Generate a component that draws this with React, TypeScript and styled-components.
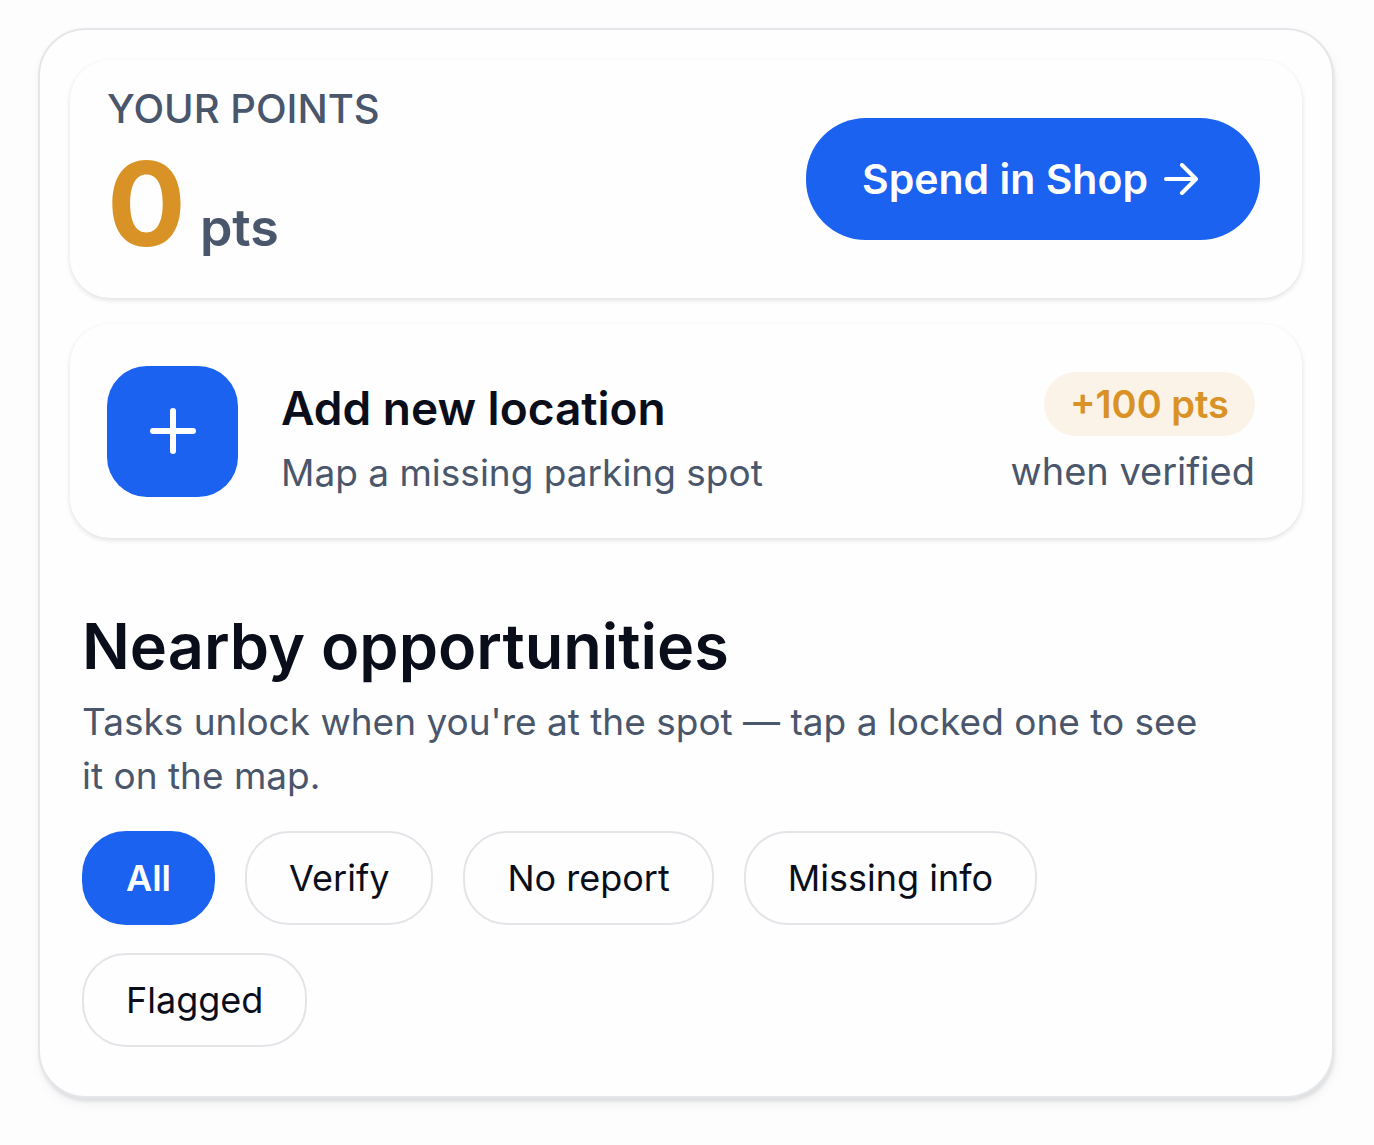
import React, { useState } from "react";
import styled, { createGlobalStyle } from "styled-components";

const GlobalStyle = createGlobalStyle`
  * { box-sizing: border-box; }
  body {
    margin: 0;
    background: #fdfdfd;
    font-family: Inter, "Liberation Sans", sans-serif;
    color: #0a0e1a;
  }
  h1, h2, p { margin: 0; }
  button { font: inherit; cursor: pointer; }
`;

const Page = styled.div`
  padding: 28px 40px 46px 38px;
`;

const Panel = styled.main`
  display: flex;
  flex-direction: column;
  gap: 26px;
  padding: 30px 30px 49px;
  border: 2px solid #e4e6e9;
  border-radius: 48px;
  background: #fefefe;
  box-shadow: 1px 4px 3px rgba(15, 23, 42, 0.08), 1px 6px 12px rgba(15, 23, 42, 0.05);
`;

const Card = styled.section`
  display: flex;
  align-items: center;
  border-radius: 40px;
  background: #fefefe;
  box-shadow: 0 2px 5px rgba(15, 23, 42, 0.13);
`;

const PointsCard = styled(Card)`
  justify-content: space-between;
  padding: 30px 42px 30px 37px;
`;

const Label = styled.p`
  font-size: 40px;
  line-height: 38px;
  font-weight: 500;
  color: #4a566b;
`;

const Points = styled.p`
  display: flex;
  align-items: baseline;
  gap: 14px;
  margin-top: 12px;
`;

const Amount = styled.span`
  font-size: 117px;
  line-height: 128px;
  font-weight: 700;
  color: #d99225;
`;

const Unit = styled.span`
  font-size: 52px;
  line-height: 52px;
  font-weight: 600;
  color: #4a566b;
`;

const ShopButton = styled.button`
  display: flex;
  align-items: center;
  gap: 16px;
  height: 122px;
  padding: 0 62px 0 56px;
  border: 0;
  border-radius: 60px;
  background: #1b62f0;
  color: #ffffff;
  font-size: 41px;
  font-weight: 600;
`;

const ActionCard = styled(Card)`
  gap: 43px;
  padding: 38px 47px 38px 37px;
`;

const AddButton = styled.button`
  display: grid;
  place-items: center;
  width: 131px;
  height: 131px;
  padding: 0;
  border: 0;
  border-radius: 40px;
  background: #1b62f0;
  color: #ffffff;
`;

const ActionText = styled.div`
  display: flex;
  flex: 1;
  flex-direction: column;
  gap: 5px;
  padding-top: 13px;
`;

const ActionTitle = styled.h2`
  font-size: 46px;
  line-height: 66px;
  font-weight: 600;
`;

const Muted = styled.p`
  font-size: 37px;
  line-height: 54px;
  color: #4a566b;
`;

const Reward = styled.div`
  display: flex;
  flex-direction: column;
  align-items: flex-end;
  gap: 8px;
  padding-top: 8px;
`;

const RewardNote = styled(Muted)`
  font-size: 38px;
`;

const Badge = styled.span`
  padding: 0 26px;
  border-radius: 32px;
  background: #fbf3e7;
  color: #d99225;
  font-size: 38px;
  line-height: 64px;
  font-weight: 600;
`;

const Nearby = styled.section`
  padding: 40px 100px 0 12px;
`;

const Title = styled.h1`
  margin-bottom: 7px;
  font-size: 63px;
  line-height: 84px;
  font-weight: 600;
`;

const Filters = styled.div`
  display: flex;
  flex-wrap: wrap;
  gap: 28px 30px;
  margin-top: 28px;
`;

const Chip = styled.button<{ $active: boolean }>`
  height: 94px;
  padding: 0 42px;
  border: 2px solid ${(p) => (p.$active ? "#1b62f0" : "#e2e4e8")};
  border-radius: 44px;
  background: ${(p) => (p.$active ? "#1b62f0" : "#fefefe")};
  color: ${(p) => (p.$active ? "#ffffff" : "#0a0e1a")};
  font-size: 36px;
  font-weight: ${(p) => (p.$active ? 600 : 400)};
`;

const filters = ["All", "Verify", "No report", "Missing info", "Flagged"];

export default function App() {
  const [active, setActive] = useState("All");
  return (
    <Page>
      <GlobalStyle />
      <Panel>
        <PointsCard>
          <div>
            <Label>YOUR POINTS</Label>
            <Points>
              <Amount>0</Amount>
              <Unit>pts</Unit>
            </Points>
          </div>
          <ShopButton>
            Spend in Shop
            <svg width="34" height="32" viewBox="0 0 34 32" fill="none" stroke="currentColor" strokeWidth="4" strokeLinecap="round" strokeLinejoin="round" aria-hidden="true">
              <path d="M2 16H31M18 2L32 16L18 30" />
            </svg>
          </ShopButton>
        </PointsCard>
        <ActionCard>
          <AddButton aria-label="Add new location">
            <svg width="46" height="46" viewBox="0 0 46 46" fill="none" stroke="currentColor" strokeWidth="6" strokeLinecap="round" aria-hidden="true">
              <path d="M23 3V43M3 23H43" />
            </svg>
          </AddButton>
          <ActionText>
            <ActionTitle>Add new location</ActionTitle>
            <Muted>Map a missing parking spot</Muted>
          </ActionText>
          <Reward>
            <Badge>+100 pts</Badge>
            <RewardNote>when verified</RewardNote>
          </Reward>
        </ActionCard>
        <Nearby>
          <Title>Nearby opportunities</Title>
          <Muted>Tasks unlock when you're at the spot — tap a locked one to see it on the map.</Muted>
          <Filters>
            {filters.map((name) => (
              <Chip key={name} $active={name === active} aria-pressed={name === active} onClick={() => setActive(name)}>
                {name}
              </Chip>
            ))}
          </Filters>
        </Nearby>
      </Panel>
    </Page>
  );
}
